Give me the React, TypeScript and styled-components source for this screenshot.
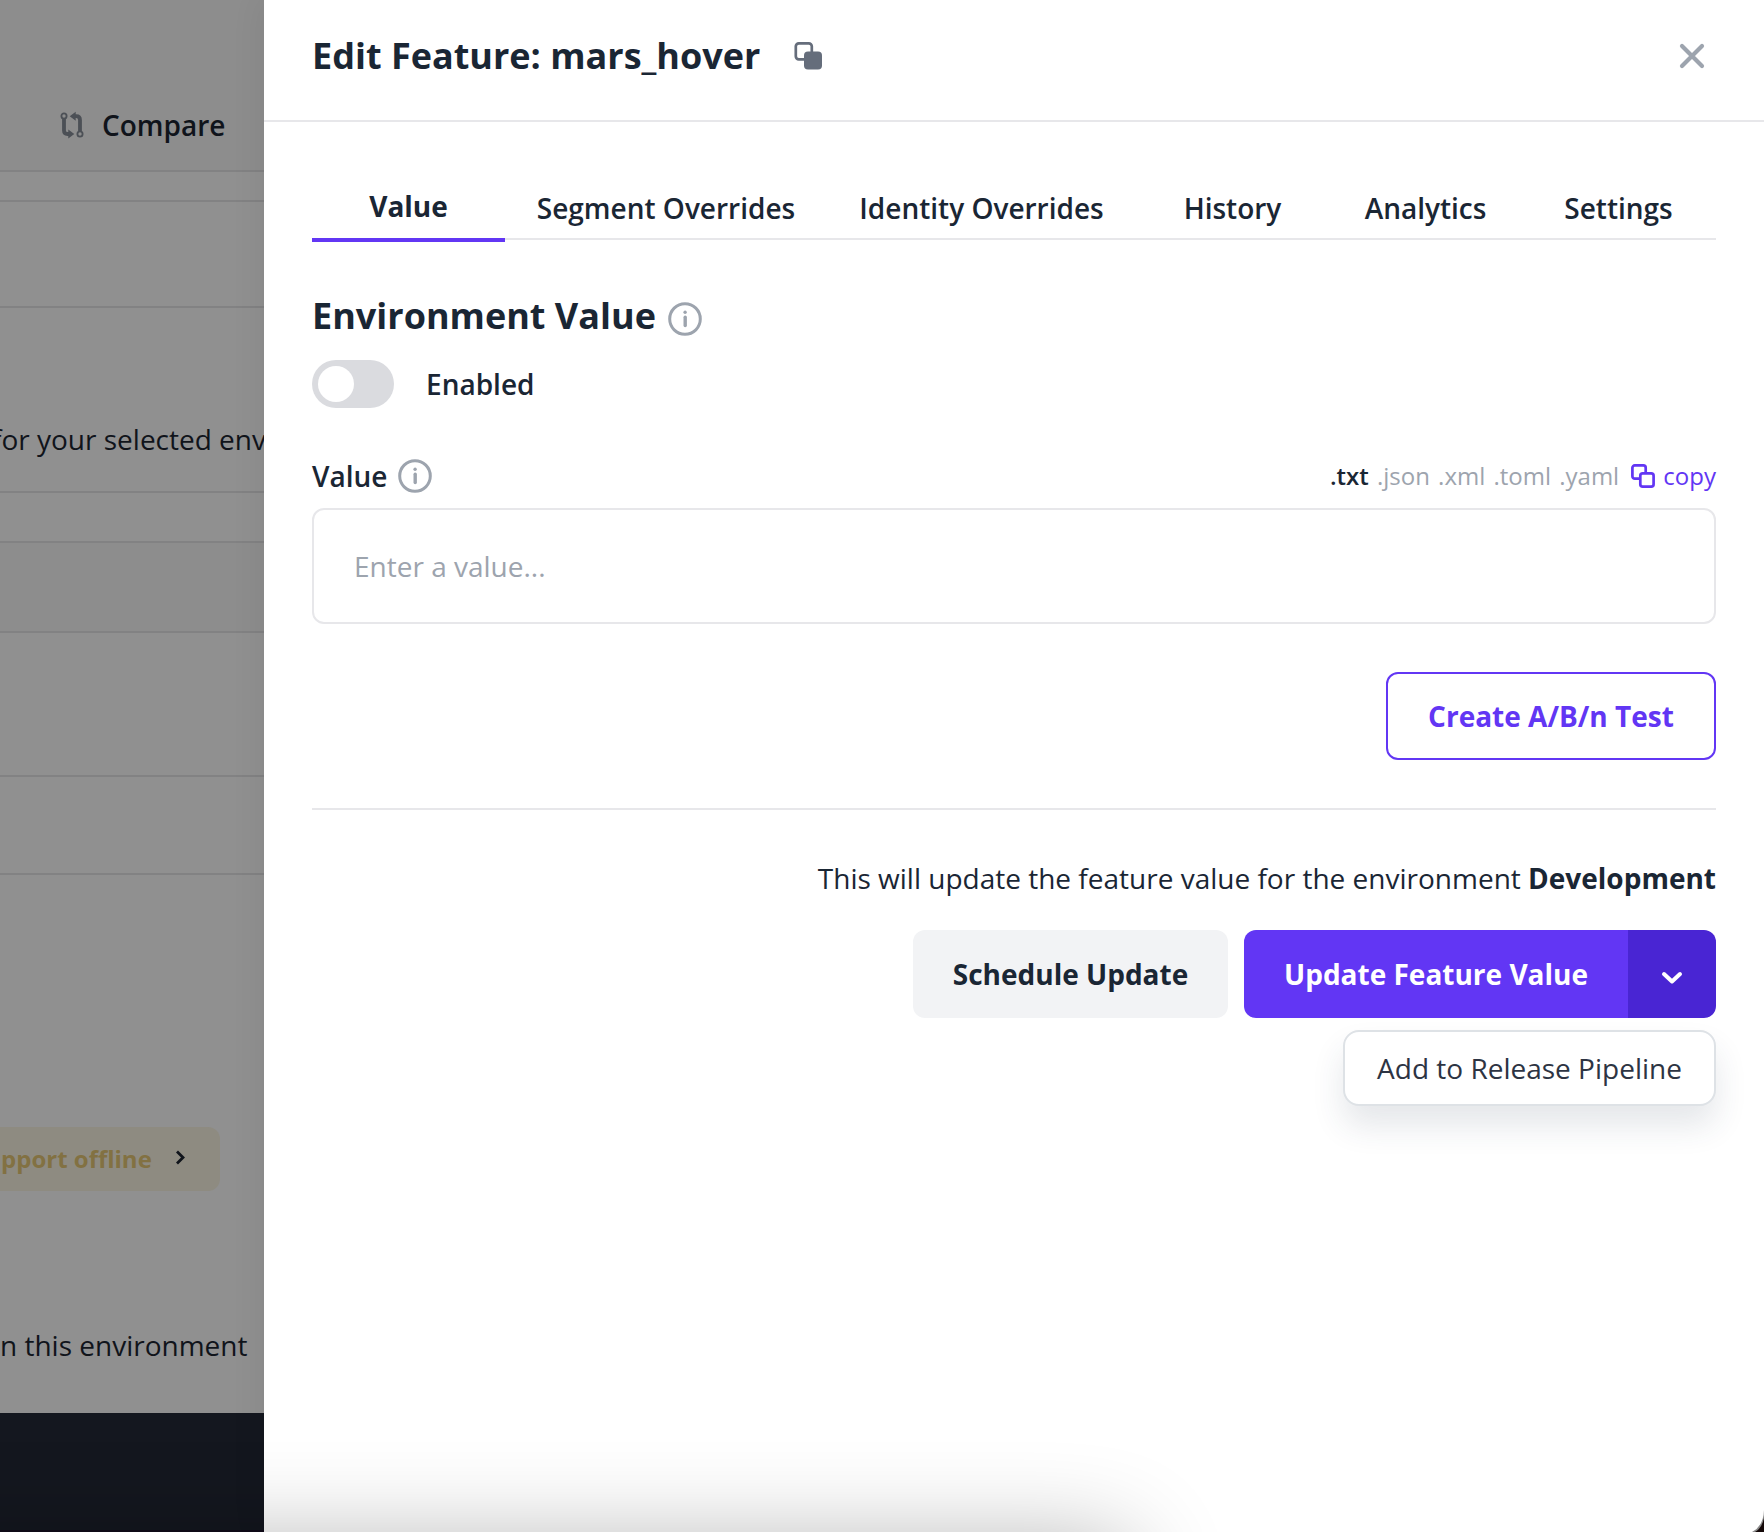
import React from 'react';
import styled, { createGlobalStyle, css } from 'styled-components';

const Global = createGlobalStyle`
  * { box-sizing: border-box; }
  html, body { margin: 0; padding: 0; background: #fff; }
  body { font-family: "Open Sans", "Noto Sans", sans-serif; font-size: 28px; line-height: 40px; color: #1a2634; overflow: hidden; }
  button { font: inherit; border: 0; background: none; padding: 0; color: inherit; cursor: pointer; }
  h1, h2, p { margin: 0; }
`;

const Screen = styled.div`
  position: relative;
  display: flex;
  width: 1764px;
  height: 1532px;
  overflow: hidden;
`;

/* Page behind the drawer */
const Backdrop = styled.div`
  width: 264px;
  height: 1532px;
  flex: none;
  display: flex;
  flex-direction: column;
  overflow: hidden;
  background: #909090;
  color: #10141b;
  white-space: nowrap;
`;
const Band = styled.div<{ $h: number; $shade?: boolean; $line?: boolean }>`
  flex: none;
  height: ${(p) => p.$h}px;
  display: flex;
  background: ${(p) => (p.$shade ? '#8d8d8d' : '#909090')};
  border-bottom: ${(p) => (p.$line === false ? 'none' : '2px solid #828283')};
`;
const CompareLink = styled.div`
  display: flex;
  align-items: center;
  gap: 16px;
  height: 40px;
  margin: 105px 0 0 58px;
  font-weight: 600;
`;
const BackText = styled.p<{ $top: number; $left: number }>`
  margin: ${(p) => p.$top}px 0 0 ${(p) => p.$left}px;
`;
const Notice = styled.div`
  display: flex;
  align-items: center;
  gap: 19px;
  width: 220px;
  height: 64px;
  margin-top: 252px;
  padding-left: 1px;
  border-radius: 0 12px 12px 0;
  background: #8e8b81;
  color: #827142;
  font-size: 24px;
  font-weight: 700;
`;
const BackFooter = styled.div`
  flex: none;
  height: 119px;
  background: #14171f;
  border-bottom: 2px solid #120c1b;
`;

/* Drawer */
const Drawer = styled.section`
  width: 1500px;
  flex: none;
  display: flex;
  flex-direction: column;
  background: #fff;
  box-shadow: 0 0 32px rgba(0, 0, 0, 0.08);
`;
const DrawerHeader = styled.header`
  display: flex;
  align-items: center;
  height: 122px;
  padding: 0 52px 8px 48px;
  border-bottom: 2px solid #e7e7ea;
`;
const Title = styled.h1`
  font-size: 36px;
  line-height: 48px;
  font-weight: 700;
`;
const CopyName = styled.button`
  display: flex;
  margin-left: 32px;
`;
const CloseButton = styled.button`
  display: flex;
  margin-left: auto;
  padding: 4px;
`;
const DrawerBody = styled.div`
  padding: 60px 48px 0;
  display: flex;
  flex-direction: column;
`;
const Tabs = styled.nav`
  display: grid;
  grid-template-columns: 193px 322px 309px repeat(3, 193px);
  height: 58px;
  box-shadow: inset 0 -2px 0 #e7e7ea;
`;
const Tab = styled.button<{ $active?: boolean }>`
  display: flex;
  justify-content: center;
  height: 58px;
  padding-top: 6px;
  font-weight: 600;
  line-height: 40px;
  white-space: nowrap;
  ${(p) =>
    p.$active &&
    css`
      height: 60px;
      padding-top: 4px;
      font-weight: 700;
      border-bottom: 4px solid #6236f4;
    `}
`;
const SectionTitle = styled.h2`
  display: flex;
  align-items: center;
  gap: 9px;
  height: 48px;
  margin-top: 52px;
  font-size: 36px;
  line-height: 48px;
  font-weight: 700;
`;
const TitleIcon = styled.span`
  display: flex;
  padding-top: 6px;
`;
const ToggleRow = styled.label`
  display: flex;
  align-items: center;
  gap: 32px;
  margin-top: 20px;
  height: 48px;
  font-weight: 600;
`;
const Switch = styled.span`
  width: 82px;
  height: 48px;
  padding: 6px;
  border-radius: 24px;
  background: #dadbdf;
`;
const Knob = styled.span`
  display: block;
  width: 36px;
  height: 36px;
  border-radius: 50%;
  background: #fff;
`;
const FieldHead = styled.div`
  display: flex;
  align-items: center;
  height: 40px;
  margin-top: 48px;
`;
const FieldLabel = styled.span`
  display: flex;
  align-items: center;
  gap: 8px;
  font-weight: 600;
`;
const Formats = styled.div`
  display: flex;
  align-items: center;
  gap: 8.200px;
  margin-left: auto;
  font-size: 24px;
  color: #9da4ae;
`;
const Format = styled.span<{ $active?: boolean }>`
  font-weight: ${(p) => (p.$active ? 600 : 400)};
  color: ${(p) => (p.$active ? '#1a2634' : 'inherit')};
`;
const CopyValue = styled.button`
  display: flex;
  align-items: center;
  gap: 8px;
  margin-left: 4px;
  color: #6236f4;
`;
const ValueBox = styled.div`
  height: 116px;
  margin-top: 12px;
  padding: 36px 40px;
  border: 2px solid #e7e7ea;
  border-radius: 12px;
  color: #9da4ae;
`;
const OutlineButton = styled.button`
  align-self: flex-end;
  width: 330px;
  height: 88px;
  margin-top: 48px;
  border: 2px solid #6236f4;
  border-radius: 12px;
  color: #6236f4;
  font-weight: 700;
`;
const Rule = styled.div`
  height: 2px;
  margin-top: 48px;
  background: #e7e7ea;
`;
const Note = styled.p`
  margin-top: 48px;
  text-align: right;
  white-space: nowrap;
  b { font-weight: 700; }
`;
const Actions = styled.div`
  display: flex;
  justify-content: flex-end;
  gap: 16px;
  height: 88px;
  margin-top: 32px;
`;
const GreyButton = styled.button`
  width: 315px;
  border-radius: 12px;
  background: #f2f3f5;
  font-weight: 700;
`;
const Split = styled.div`
  position: relative;
  display: flex;
  width: 472px;
`;
const SplitMain = styled.button`
  width: 384px;
  border-radius: 12px 0 0 12px;
  background: #6236f4;
  color: #fff;
  font-weight: 700;
`;
const SplitToggle = styled.button`
  width: 88px;
  display: flex;
  align-items: center;
  justify-content: center;
  padding-top: 8px;
  border-radius: 0 12px 12px 0;
  background: #4925d3;
`;
const Menu = styled.div`
  position: absolute;
  top: 100px;
  right: 0;
  width: 373px;
  height: 76px;
  display: flex;
  align-items: center;
  justify-content: center;
  border: 2px solid #dee2e6;
  border-radius: 16px;
  background: #fff;
  color: #2d3443;
  white-space: nowrap;
  box-shadow: 0 20px 32px rgba(45, 60, 80, 0.12);
`;
const WindowShade = styled.div`
  position: absolute;
  left: -100px;
  top: 1542px;
  width: 1230px;
  height: 300px;
  border-radius: 20px;
  box-shadow: 0 0 96px rgba(0, 0, 0, 0.3);
`;
const Corner = styled.svg`
  position: absolute;
  right: 0;
  bottom: 0;
`;

const InfoIcon = () => (
  <svg width="40" height="40" viewBox="0 0 40 40" fill="none">
    <circle cx="20" cy="20" r="15.3" stroke="#9da4ae" strokeWidth="3" />
    <path d="M20.2 18.3v8.2" stroke="#9da4ae" strokeWidth="3.4" strokeLinecap="round" />
    <circle cx="20.1" cy="13.3" r="1.7" fill="#9da4ae" />
  </svg>
);

const CompareIcon = () => (
  <svg width="28" height="28" viewBox="0 0 28 28" fill="none" stroke="#4c5056">
    <circle cx="6" cy="5" r="2.6" strokeWidth="1.8" />
    <circle cx="22" cy="23" r="2.6" strokeWidth="1.8" />
    <path d="M6 8v11.500q0 3.500 3.500 3.500h1.500M22 20V9q0-3.800-3.800-3.800h-1.500" strokeWidth="3.8" />
    <path d="M10.300 18.500v9l6-4.500zM17.700 .7v9l-6-4.500z" fill="#4c5056" stroke="none" />
  </svg>
);

export default function App() {
  return (
    <>
      <Global />
      <Screen>
        <Backdrop>
          <Band $h={172} $shade>
            <CompareLink>
              <CompareIcon />
              Compare
            </CompareLink>
          </Band>
          <Band $h={30} />
          <Band $h={106} />
          <Band $h={185}>
            <BackText $top={111} $left={-8}>for your selected environment</BackText>
          </Band>
          <Band $h={50} />
          <Band $h={90} $shade />
          <Band $h={144} />
          <Band $h={98} />
          <Band $h={538} $line={false}>
            <div>
              <Notice>
                pport offline
                <svg width="16" height="20" viewBox="0 0 16 20" fill="none">
                  <path d="M6 2.500l6 6-6 6" stroke="#10141b" strokeWidth="2.800" />
                </svg>
              </Notice>
              <BackText $top={134} $left={0}>n this environment</BackText>
            </div>
          </Band>
          <BackFooter />
        </Backdrop>

        <Drawer>
          <DrawerHeader>
            <Title>Edit Feature: mars_hover</Title>
            <CopyName aria-label="Copy name">
              <svg width="32" height="32" viewBox="0 0 32 32" fill="none">
                <rect x="3.800" y="3.300" width="16" height="16" rx="3" stroke="#656d7b" strokeWidth="2.700" />
                <rect x="12" y="11.500" width="18" height="18" rx="4" fill="#656d7b" />
              </svg>
            </CopyName>
            <CloseButton aria-label="Close">
              <svg width="32" height="32" viewBox="0 0 32 32" fill="none">
                <path d="M6 6l20 20M26 6L6 26" stroke="#9da4ae" strokeWidth="4.200" strokeLinecap="round" />
              </svg>
            </CloseButton>
          </DrawerHeader>

          <DrawerBody>
            <Tabs>
              <Tab $active>Value</Tab>
              <Tab>Segment Overrides</Tab>
              <Tab>Identity Overrides</Tab>
              <Tab>History</Tab>
              <Tab>Analytics</Tab>
              <Tab>Settings</Tab>
            </Tabs>

            <SectionTitle>
              Environment Value
              <TitleIcon><InfoIcon /></TitleIcon>
            </SectionTitle>

            <ToggleRow>
              <Switch><Knob /></Switch>
              Enabled
            </ToggleRow>

            <FieldHead>
              <FieldLabel>Value <InfoIcon /></FieldLabel>
              <Formats>
                <Format $active>.txt</Format>
                <Format>.json</Format>
                <Format>.xml</Format>
                <Format>.toml</Format>
                <Format>.yaml</Format>
                <CopyValue>
                  <svg width="24" height="24" viewBox="0 0 24 24" fill="none" stroke="#6236f4" strokeWidth="2.700">
                    <rect x="9.300" y="9.300" width="13.300" height="13.300" rx="2.400" />
                    <path d="M9 14.700H3.800a2.400 2.400 0 0 1-2.400-2.400V3.800a2.400 2.400 0 0 1 2.400-2.400h8.500a2.400 2.400 0 0 1 2.400 2.400V9" />
                  </svg>
                  copy
                </CopyValue>
              </Formats>
            </FieldHead>
            <ValueBox>Enter a value...</ValueBox>

            <OutlineButton>Create A/B/n Test</OutlineButton>
            <Rule />
            <Note>
              This will update the feature value for the environment <b>Development</b>
            </Note>
            <Actions>
              <GreyButton>Schedule Update</GreyButton>
              <Split>
                <SplitMain>Update Feature Value</SplitMain>
                <SplitToggle aria-label="More actions">
                  <svg width="24" height="16" viewBox="0 0 24 16" fill="none">
                    <path d="M4 4l8 7.500L20 4" stroke="#fff" strokeWidth="4" strokeLinecap="round" strokeLinejoin="round" />
                  </svg>
                </SplitToggle>
                <Menu>Add to Release Pipeline</Menu>
              </Split>
            </Actions>
          </DrawerBody>
        </Drawer>
        <WindowShade />
        <Corner width="12" height="22" viewBox="0 0 12 22">
          <path d="M12 0Q11.500 16 0 22H12Z" fill="#8a8a8a" />
          <path d="M12 8Q10 18 3 22H12Z" fill="#140808" />
        </Corner>
      </Screen>
    </>
  );
}
